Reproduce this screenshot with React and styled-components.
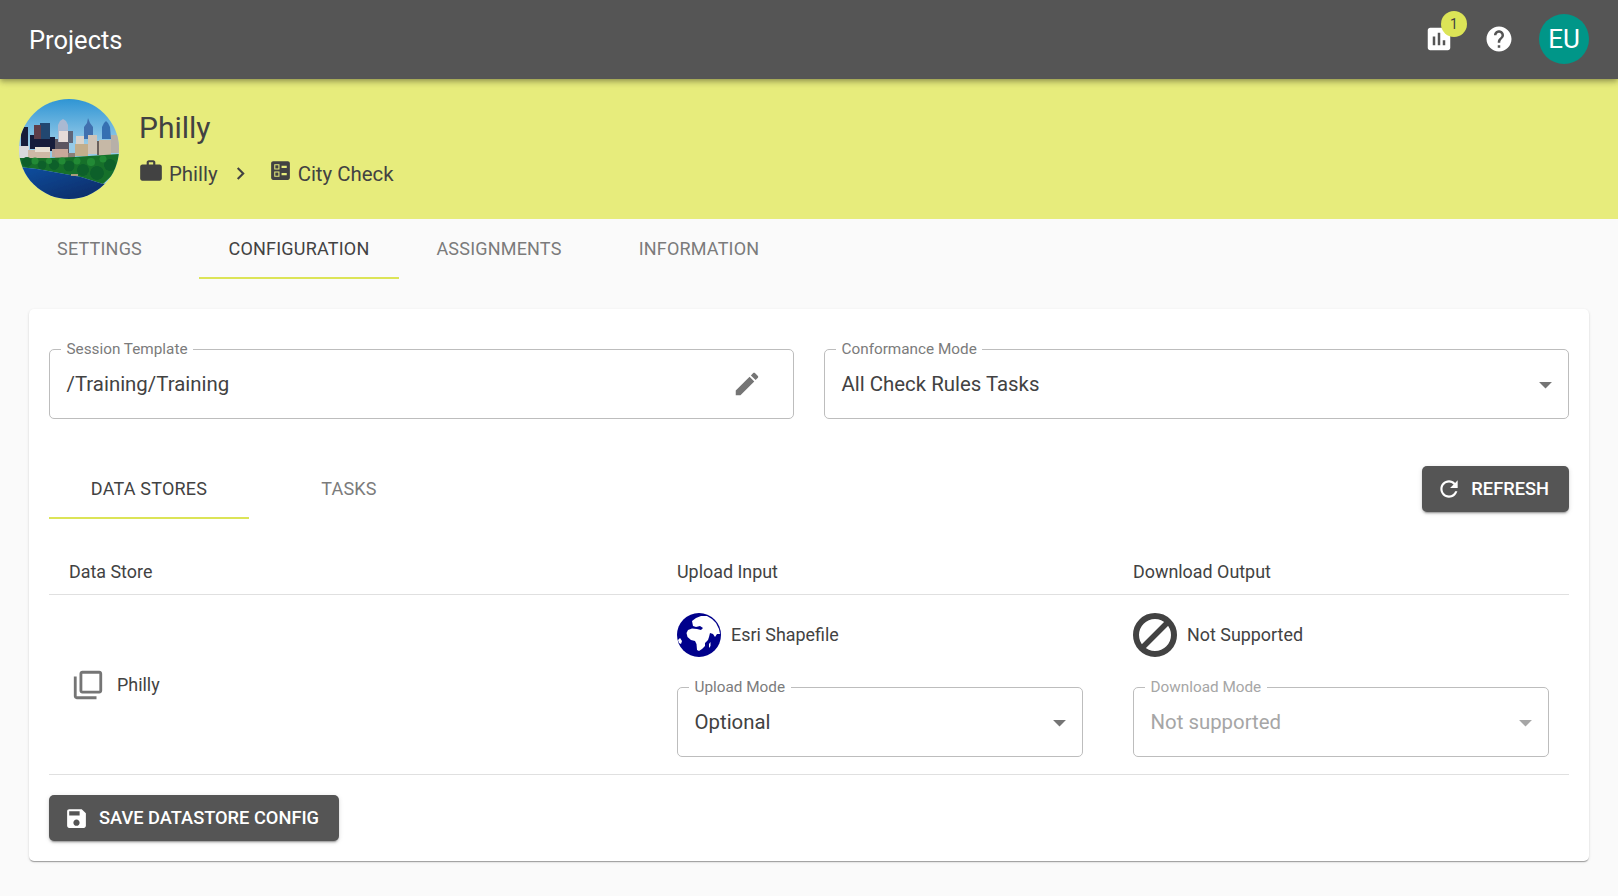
import React from 'react';
import styled, { createGlobalStyle } from 'styled-components';

const Global = createGlobalStyle`
  html, body { margin: 0; padding: 0; background: #fafafa; }
  body { font-family: Roboto, "Liberation Sans", sans-serif; color: #424242; overflow: hidden; }
  * { box-sizing: border-box; }
`;
const Page = styled.div`width: 1618px; height: 896px; display: flex; flex-direction: column; background: #fafafa;`;
const TopBar = styled.header`
  height: 79px; flex: none; background: #555; color: #fff; display: flex; align-items: center;
  padding: 0 29px 1px; position: relative; z-index: 2;
  box-shadow: 0 2px 4px -1px rgba(0,0,0,.2), 0 4px 5px 0 rgba(0,0,0,.14), 0 1px 10px 0 rgba(0,0,0,.12);
`;
const TopTitle = styled.div`font-size: 25.5px; font-weight: 400; flex: 1; padding-top: 1px;`;
const TopIcon = styled.div`position: relative; width: 30px; height: 30px; margin-right: ${p => p.$mr}px; color: #fff; display: flex;`;
const Badge = styled.span`
  position: absolute; top: -13px; left: 17px; width: 26px; height: 26px; border-radius: 50%;
  background: #dce457; color: #424242; font-size: 14px; display: flex; align-items: center; justify-content: center;
`;
const UserAvatar = styled.div`
  width: 50px; height: 50px; border-radius: 50%; background: #009688; color: #fff; font-size: 26px;
  display: flex; align-items: center; justify-content: center;
`;
const Banner = styled.section`height: 140px; flex: none; background: #e7ec7c; display: flex; align-items: center; padding: 0 19px; gap: 20px; color: #424242;`;
const Photo = styled.svg`width: 100px; height: 100px; border-radius: 50%; flex: none; display: block;`;
const BannerText = styled.div`display: flex; flex-direction: column; gap: 13.5px;`;
const BannerTitle = styled.div`font-size: 30px; line-height: 36px;`;
const Crumbs = styled.div`display: flex; align-items: center; font-size: 20.4px; line-height: 28px; color: #424242; margin-left: -1px;`;
const CrumbIcon = styled.span`display: flex; margin: -6px ${p => p.$gap}px 0 0;`;
const CrumbSep = styled.span`display: flex; margin: 0 ${p => p.$right}px 0 ${p => p.$left}px;`;
const Tabs = styled.nav`display: flex; flex: none; height: 60px;`;
const Tab = styled.div`
  width: ${p => p.$w}px; height: ${p => p.$h}px; display: flex; align-items: center; justify-content: center;
  font-size: 18px; letter-spacing: .2px; text-transform: uppercase; padding-bottom: ${p => p.$pb || 0}px;
  color: ${p => p.$active ? '#424242' : '#7b7b7b'};
  border-bottom: 2px solid ${p => p.$active ? '#dce457' : 'transparent'};
`;
const Main = styled.main`padding: 30px 29px 0; flex: 1;`;
const Card = styled.div`
  height: 552px; background: #fff; border-radius: 5px; padding: 40px 20px 20px; display: flex; flex-direction: column;
  box-shadow: 0 2px 1px -1px rgba(0,0,0,.2), 0 1px 1px 0 rgba(0,0,0,.14), 0 1px 3px 0 rgba(0,0,0,.12);
`;
const FieldRow = styled.div`display: grid; grid-template-columns: 1fr 1fr; gap: 30px;`;
const Field = styled.div`
  position: relative; height: 70px; flex: none; border: 1px solid #bdbdbd; border-radius: 5px;
  display: flex; align-items: center; justify-content: space-between; padding: 0 ${p => p.$pr}px 0 16.5px;
  font-size: 20.4px; color: ${p => p.$disabled ? '#a6a6a6' : '#424242'};
`;
const FieldLabel = styled.label`
  position: absolute; top: -10px; left: 11px; padding: 0 5.5px; background: #fff; font-size: 15.3px; line-height: 18px;
  color: ${p => p.$disabled ? '#a6a6a6' : '#7b7b7b'};
`;
const Arrow = styled.svg`width: 31px; height: 31px; fill: ${p => p.$disabled ? '#a6a6a6' : '#757575'}; flex: none;`;
const EditIcon = styled.svg`width: 30px; height: 30px; fill: #757575; flex: none;`;
const TabRow = styled.div`display: flex; align-items: flex-start; justify-content: space-between; margin-top: 47px;`;
const InnerTabs = styled.div`display: flex;`;
const Button = styled.button`
  height: 46px; border: 0; border-radius: 5px; background: #555; color: #fff; font: 500 18.25px Roboto, sans-serif;
  display: inline-flex; align-items: center; text-transform: uppercase; padding: 0 20px 0 ${p => p.$pl}px; gap: ${p => p.$gap}px;
  box-shadow: 0 3px 1px -2px rgba(0,0,0,.2), 0 2px 2px 0 rgba(0,0,0,.14), 0 1px 5px 0 rgba(0,0,0,.12);
`;
const ButtonText = styled.span`margin-bottom: 2px;`;
const TableRow = styled.div`
  display: grid; grid-template-columns: 608px 456px 456px; border-bottom: 1px solid #e0e0e0;
  height: ${p => p.$h}px; margin-top: ${p => p.$mt || 0}px;
`;
const HeadCell = styled.div`padding: 3px 20px 0; display: flex; align-items: center; font-size: 17.9px; color: #424242;`;
const StoreCell = styled.div`padding: 0 20px 0 22px; display: flex; align-items: center; font-size: 17.9px; gap: 12px; color: #424242;`;
const ModeCell = styled.div`padding: 18px ${p => p.$pr}px 0 20px; display: flex; flex-direction: column; gap: 30px;`;
const Format = styled.div`display: flex; align-items: center; gap: 10px; font-size: 17.9px; height: 44px; color: #424242;`;
const FormatName = styled.span`margin-bottom: 2px;`;
const GlyphSvg = styled.svg`width: 44px; height: 44px; flex: none;`;
const Footer = styled.div`margin-top: 20px;`;

const I = ({ d, size = 24, color = 'currentColor', rule }) => (
  <svg width={size} height={size} viewBox="0 0 24 24" fill={color}><path d={d} fillRule={rule} /></svg>
);

const PhotoImg = () => (
  <Photo viewBox="0 0 100 100">
    <defs>
      <linearGradient id="sky" x1="0" y1="0" x2="0" y2="1">
        <stop offset="0" stopColor="#2f95d4" /><stop offset=".45" stopColor="#97cbe8" />
      </linearGradient>
      <linearGradient id="river" x1="0" y1="0" x2="1" y2="1">
        <stop offset="0" stopColor="#0d4fa0" /><stop offset="1" stopColor="#06265e" />
      </linearGradient>
      <filter id="soft"><feGaussianBlur stdDeviation=".35" /></filter>
    </defs>
    <rect width="100" height="100" fill="url(#sky)" />
    <g filter="url(#soft)">
      <g fill="#141d3a">
        <polygon points="2,50 2,34 5,28 9,28 9,50" />
        <rect x="11" y="36" width="17" height="14" />
        <rect x="28" y="38" width="8" height="14" />
      </g>
      <rect x="21" y="24" width="10" height="16" fill="#24466f" />
      <rect x="15" y="26" width="7" height="14" fill="#5e3d4a" />
      <rect x="36" y="40" width="14" height="16" fill="#5b5560" />
      <polygon points="39,43 39,26 41,22 44,20 47,22 49,26 49,43" fill="#aab9d2" />
      <rect x="40" y="32" width="9" height="11" fill="#e6dcd8" />
      <rect x="49" y="32" width="5" height="12" fill="#5f6678" />
      <polygon points="65,40 65,28 68,24 69,19 71,24 74,28 74,40" fill="#3f6fae" />
      <polygon points="83,40 83,28 85,24 87,22 89,24 91,28 92,40" fill="#3670b2" />
      <rect x="57" y="37" width="8" height="10" fill="#d9d3cc" />
      <rect x="69" y="36" width="9" height="19" fill="#cfc4b8" />
      <rect x="78" y="42" width="6" height="14" fill="#6b605c" />
      <rect x="80" y="41" width="12" height="16" fill="#c6b8a6" />
      <rect x="92" y="36" width="8" height="18" fill="#b7b0a8" />
      <rect x="56" y="45" width="13" height="12" fill="#c2ae8c" />
      <rect x="0" y="47" width="10" height="12" fill="#d9d9dc" />
      <rect x="9" y="51" width="22" height="9" fill="#cdb9a6" />
      <rect x="16" y="48" width="15" height="5" fill="#e6dfd2" />
      <rect x="33" y="50" width="3" height="8" fill="#bfa89a" />
      <rect x="36" y="50" width="13" height="9" fill="#c9a89a" />
      <rect x="49" y="54" width="7" height="5" fill="#8a7f78" />
      <polygon points="0,59 30,59 55,58 100,55 100,70 84,85 62,78 40,74 18,70 0,68" fill="#17702b" />
      <g fill="#10602a">
        <circle cx="8" cy="63" r="5" /><circle cx="23" cy="66" r="4.5" /><circle cx="35" cy="66" r="5" />
        <circle cx="50" cy="67" r="5.5" /><circle cx="64" cy="71" r="6" /><circle cx="78" cy="74" r="7" /><circle cx="91" cy="66" r="6" />
      </g>
      <g fill="#238a36">
        <circle cx="16" cy="62" r="3.5" /><circle cx="30" cy="62" r="3" /><circle cx="43" cy="62" r="3.5" />
        <circle cx="58" cy="62" r="3.5" /><circle cx="72" cy="63" r="4" /><circle cx="84" cy="60" r="3.5" />
      </g>
      <path d="M0 68 L18 70 L40 74 L62 78 L84 85 L100 82 L100 100 L0 100Z" fill="url(#river)" />
      <rect x="52" y="75" width="7" height="2" fill="#a99c7c" />
    </g>
  </Photo>
);

const Globe = () => (
  <GlyphSvg viewBox="0 0 44 44">
    <circle cx="22" cy="22" r="22" fill="#00008b" />
    <path fill="#fff" d="M16 13 L15 8 L19 5 L24 3 L30 3 L35 6 L39 10 L42 16 L43 21 L40 21 L38 24 L36 21 L33 20 L32 24 L31 27 L28 30 L28 33 L25 36 L22 38 L20 37 L19.5 31 L18 28 L14 27 L10.5 24 L9.5 20 L11 17 L15 15.5 L20 16 L24 17 L26 15 L23 13 L19 14Z" />
    <path fill="#fff" d="M32 31 L33.5 29 L33.5 33 L32 35Z" />
    <path fill="#fff" d="M1 27 L3 25 L5 28 L4 31 L2 30Z" />
  </GlyphSvg>
);

const NoEntry = () => (
  <GlyphSvg viewBox="0 0 44 44">
    <circle cx="22" cy="22" r="19" fill="none" stroke="#424242" strokeWidth="6" />
    <line x1="9" y1="35" x2="35" y2="9" stroke="#424242" strokeWidth="5.5" />
  </GlyphSvg>
);

const DropArrow = ({ disabled }) => (
  <Arrow viewBox="0 0 24 24" $disabled={disabled}><path d="M7 10l5 5 5-5z" /></Arrow>
);

export default function App() {
  return (
    <Page>
      <Global />
      <TopBar>
        <TopTitle>Projects</TopTitle>
        <TopIcon $mr={30}>
          <I size={30} d="M19 3H5c-1.1 0-2 .9-2 2v14c0 1.1.9 2 2 2h14c1.1 0 2-.9 2-2V5c0-1.1-.9-2-2-2zM9 17H7v-7h2v7zm4 0h-2V7h2v10zm4 0h-2v-4h2v4z" />
          <Badge>1</Badge>
        </TopIcon>
        <TopIcon $mr={25}>
          <I size={30} d="M12 2C6.48 2 2 6.48 2 12s4.48 10 10 10 10-4.48 10-10S17.52 2 12 2zm1 17h-2v-2h2v2zm2.07-7.75l-.9.92C13.45 12.9 13 13.5 13 15h-2v-.5c0-1.1.45-2.1 1.17-2.83l1.24-1.26c.37-.36.59-.86.59-1.41 0-1.1-.9-2-2-2s-2 .9-2 2H8c0-2.21 1.79-4 4-4s4 1.79 4 4c0 .88-.36 1.68-.93 2.25z" />
        </TopIcon>
        <UserAvatar>EU</UserAvatar>
      </TopBar>
      <Banner>
        <PhotoImg />
        <BannerText>
          <BannerTitle>Philly</BannerTitle>
          <Crumbs>
            <CrumbIcon $gap={5}><I size={26} d="M20 6h-4V4c0-1.11-.89-2-2-2h-4c-1.11 0-2 .89-2 2v2H4c-1.11 0-1.99.89-1.99 2L2 19c0 1.11.89 2 2 2h16c1.11 0 2-.89 2-2V8c0-1.11-.89-2-2-2zm-6 0h-4V4h4v2z" /></CrumbIcon>
            Philly
            <CrumbSep $left={10} $right={15}><I size={25} d="M10 6L8.59 7.41 13.17 12l-4.58 4.59L10 18l6-6z" /></CrumbSep>
            <CrumbIcon $gap={5}><I size={25} rule="evenodd" d="M13 9.5h5v-2h-5v2zm0 7h5v-2h-5v2zm6 4.5H5c-1.1 0-2-.9-2-2V5c0-1.1.9-2 2-2h14c1.1 0 2 .9 2 2v14c0 1.1-.9 2-2 2zM6 11h5V6H6v5zm1-4h3v3H7V7zM6 18h5v-5H6v5zm1-4h3v3H7v-3z" /></CrumbIcon>
            City Check
          </Crumbs>
        </BannerText>
      </Banner>
      <Tabs>
        <Tab $w={199} $h={60}>Settings</Tab>
        <Tab $w={200} $h={60} $active>Configuration</Tab>
        <Tab $w={200} $h={60}>Assignments</Tab>
        <Tab $w={200} $h={60}>Information</Tab>
      </Tabs>
      <Main>
        <Card>
          <FieldRow>
            <Field $pr={31}>
              <FieldLabel>Session Template</FieldLabel>
              /Training/Training
              <EditIcon viewBox="0 0 24 24"><path d="M3 17.25V21h3.75L17.81 9.94l-3.75-3.75L3 17.25zM20.71 7.04c.39-.39.39-1.02 0-1.41l-2.34-2.34c-.39-.39-1.02-.39-1.41 0l-1.83 1.83 3.75 3.75 1.83-1.83z" /></EditIcon>
            </Field>
            <Field $pr={7.5}>
              <FieldLabel>Conformance Mode</FieldLabel>
              All Check Rules Tasks
              <DropArrow />
            </Field>
          </FieldRow>
          <TabRow>
            <InnerTabs>
              <Tab $w={200} $h={53} $pb={6} $active>Data Stores</Tab>
              <Tab $w={200} $h={53} $pb={6}>Tasks</Tab>
            </InnerTabs>
            <Button $pl={14} $gap={9}>
              <I size={26} d="M17.65 6.35C16.2 4.9 14.21 4 12 4c-4.42 0-7.99 3.58-7.99 8s3.57 8 7.99 8c3.73 0 6.84-2.55 7.73-6h-2.08c-.82 2.33-3.04 4-5.65 4-3.31 0-6-2.69-6-6s2.69-6 6-6c1.66 0 3.14.69 4.22 1.78L13 11h7V4l-2.35 2.35z" />
              <ButtonText>Refresh</ButtonText>
            </Button>
          </TabRow>
          <TableRow $h={50} $mt={26}>
            <HeadCell>Data Store</HeadCell>
            <HeadCell>Upload Input</HeadCell>
            <HeadCell>Download Output</HeadCell>
          </TableRow>
          <TableRow $h={180}>
            <StoreCell>
              <I size={34} color="#757575" d="M4 6H2v14c0 1.1.9 2 2 2h14v-2H4V6zm16-4H8c-1.1 0-2 .9-2 2v12c0 1.1.9 2 2 2h12c1.1 0 2-.9 2-2V4c0-1.1-.9-2-2-2zm0 14H8V4h12v12z" />
              Philly
            </StoreCell>
            <ModeCell $pr={30}>
              <Format><Globe /><FormatName>Esri Shapefile</FormatName></Format>
              <Field $pr={7.5}>
                <FieldLabel>Upload Mode</FieldLabel>
                Optional
                <DropArrow />
              </Field>
            </ModeCell>
            <ModeCell $pr={20}>
              <Format><NoEntry /><FormatName>Not Supported</FormatName></Format>
              <Field $pr={7.5} $disabled>
                <FieldLabel $disabled>Download Mode</FieldLabel>
                Not supported
                <DropArrow disabled />
              </Field>
            </ModeCell>
          </TableRow>
          <Footer>
            <Button $pl={15} $gap={10}>
              <I size={25} d="M17 3H5c-1.11 0-2 .9-2 2v14c0 1.1.89 2 2 2h14c1.1 0 2-.9 2-2V7l-4-4zm-5 16c-1.66 0-3-1.34-3-3s1.34-3 3-3 3 1.34 3 3-1.34 3-3 3zm3-10H5V5h10v4z" />
              <ButtonText>Save Datastore Config</ButtonText>
            </Button>
          </Footer>
        </Card>
      </Main>
    </Page>
  );
}
